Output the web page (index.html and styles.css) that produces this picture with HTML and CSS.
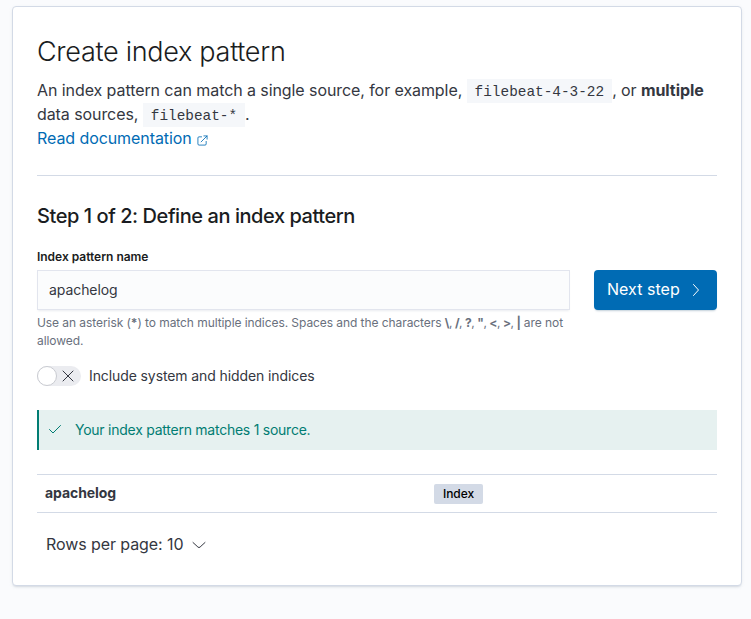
FILE: index.html
```html
<!DOCTYPE html>
<html lang="en">
<head>
<meta charset="utf-8">
<title>Create index pattern</title>
<link rel="stylesheet" href="styles.css">
</head>
<body>
<main class="panel">
  <header class="intro">
    <h1 class="title">Create index pattern</h1>
    <p class="text">An index pattern can match a single source, for example, <code>filebeat-4-3-22</code>, or <strong>multiple</strong><br>data sources, <code>filebeat-*</code>.<br><a class="link" href="#">Read documentation<svg class="ext" viewBox="0 0 12 12"><path d="M5 2H2.200A1.200 1.200 0 0 0 1 3.200v6.600A1.200 1.200 0 0 0 2.200 11h6.600a1.200 1.200 0 0 0 1.200-1.200V7M7.500 1H11v3.500M11 1L4.500 7.500"/></svg></a></p>
  </header>
  <h2 class="step">Step 1 of 2: Define an index pattern</h2>
  <form class="form">
    <div class="field">
      <label class="label" for="name">Index pattern name</label>
      <input class="input" id="name" type="text" value="apachelog">
      <p class="help">Use an asterisk (<strong>*</strong>) to match multiple indices. Spaces and the characters <span class="chars"><strong>\</strong>, <strong>/</strong>, <strong>?</strong>, <strong>"</strong>, <strong>&lt;</strong>, <strong>&gt;</strong>, <strong>|</strong></span> are not<br>allowed.</p>
    </div>
    <button class="next" type="button"><span>Next step</span><svg viewBox="0 0 16 16"><path d="M5.500 2.500L10.500 8l-5 5.500"/></svg></button>
  </form>
  <div class="switch">
    <span class="track"><span class="thumb"></span><svg viewBox="0 0 12 12"><path d="M1 1l10 10M11 1L1 11"/></svg></span>
    <span>Include system and hidden indices</span>
  </div>
  <div class="callout">
    <svg viewBox="0 0 16 16"><path d="M2.500 7.500L6 11l7.500-7.500"/></svg>
    <span>Your index pattern matches 1 source.</span>
  </div>
  <div class="row">
    <strong class="name">apachelog</strong>
    <div><span class="badge">Index</span></div>
  </div>
  <div class="pager"><span>Rows per page: 10</span><svg viewBox="0 0 16 16"><path d="M2 6.500l4.900 4.500a1.500 1.500 0 0 0 2.200 0L14 6.500"/></svg></div>
</main>
</body>
</html>
```
FILE: styles.css
```css
* { box-sizing: border-box; }
body {
  margin: 0;
  padding: 6px 9px 33px 12px;
  background: #fafbfd;
  color: #343741;
  font: 400 16px/24px Inter, "Liberation Sans", sans-serif;
  letter-spacing: -0.08px;
}
h1, h2, p { margin: 0; }
svg { flex: none; fill: none; stroke: currentColor; stroke-linecap: round; stroke-linejoin: round; }
strong { font-weight: 700; }
.panel {
  height: 580px;
  padding: 24px;
  background: #fff;
  border: 1px solid #d3dae6;
  border-radius: 4px;
  box-shadow: 0 2px 2px -1px rgba(152, 162, 179, .3), 0 1px 5px -2px rgba(152, 162, 179, .3);
}
.intro { height: 145px; border-bottom: 1px solid #d3dae6; }
.title {
  height: 40px;
  margin-bottom: 7px;
  color: #1a1c21;
  font-size: 27px;
  font-weight: 300;
  line-height: 42px;
  letter-spacing: -0.29px;
}
.text { white-space: nowrap; }
code {
  padding: 5px 8px 3px;
  background: #f5f7fa;
  font: 14.4px/1 "Liberation Mono", monospace;
  letter-spacing: 0;
}
.link { color: #006bb4; text-decoration: none; }
.ext { width: 11px; height: 11px; margin-left: 5px; vertical-align: -2px; stroke-width: .9; }
.step {
  margin-top: 24px;
  color: #1a1c21;
  font-size: 20px;
  font-weight: 500;
  line-height: 32px;
  letter-spacing: -0.44px;
}
.form { display: flex; gap: 24px; margin-top: 16px; }
.field { width: 533px; }
.label {
  display: block;
  height: 22px;
  color: #1a1c21;
  font-size: 12px;
  font-weight: 600;
  line-height: 18px;
  letter-spacing: -0.02px;
}
.input {
  display: block;
  width: 100%;
  height: 40px;
  padding: 0 11px 2px;
  background: #fbfcfd;
  border: 1px solid #e2e5ee;
  border-radius: 0;
  box-shadow: 0 2px 2px -1px rgba(152, 162, 179, .2);
  color: #343741;
  font: inherit;
  font-size: 14px;
  letter-spacing: -0.07px;
  outline: 0;
}
.help {
  padding-top: 4px;
  color: #69707d;
  font-size: 12px;
  line-height: 18px;
  letter-spacing: -0.07px;
  white-space: nowrap;
}
.chars { letter-spacing: -0.46px; }
.next {
  display: flex;
  align-items: center;
  justify-content: space-between;
  width: 123px;
  height: 40px;
  margin-top: 22px;
  padding: 0 13px;
  background: #006bb4;
  border: 0;
  border-radius: 4px;
  box-shadow: 0 2px 2px -1px rgba(54, 97, 126, .3);
  color: #fff;
  font: inherit;
  letter-spacing: 0.04px;
}
.next span { padding-bottom: 2px; }
.next svg { width: 16px; height: 16px; }
.switch {
  display: flex;
  align-items: center;
  gap: 8px;
  height: 20px;
  margin-top: 16px;
  font-size: 14px;
  letter-spacing: -0.1px;
}
.track {
  display: flex;
  align-items: center;
  gap: 5px;
  width: 44px;
  height: 20px;
  background: #ebecf0;
  border-radius: 10px;
}
.track svg { width: 12px; height: 12px; }
.thumb {
  width: 20px;
  height: 20px;
  background: #fff;
  border: 1px solid #c9cbd1;
  border-radius: 50%;
}
.callout {
  display: flex;
  align-items: center;
  gap: 12px;
  height: 40px;
  margin-top: 24px;
  padding-left: 8px;
  background: #e6f1f0;
  border-left: 2px solid #017d73;
  color: #017d73;
  font-size: 14px;
  letter-spacing: -0.25px;
}
.callout svg { width: 16px; height: 16px; }
.row {
  display: grid;
  grid-template-columns: 389px 1fr;
  align-items: center;
  height: 39px;
  margin-top: 24px;
  padding: 0 8px;
  border-top: 1px solid #d3dae6;
  border-bottom: 1px solid #d3dae6;
  font-size: 14px;
  line-height: 20px;
  letter-spacing: -0.07px;
}
.name { padding-bottom: 2px; }
.badge {
  display: block;
  width: 49px;
  height: 20px;
  border-radius: 2px;
  background: #d3dae6;
  color: #000;
  font-size: 12px;
  font-weight: 500;
  text-align: center;
}
.pager {
  display: flex;
  align-items: center;
  gap: 8px;
  height: 38px;
  margin: 12px 0 0 9px;
}
.pager svg { width: 16px; height: 16px; }
```
